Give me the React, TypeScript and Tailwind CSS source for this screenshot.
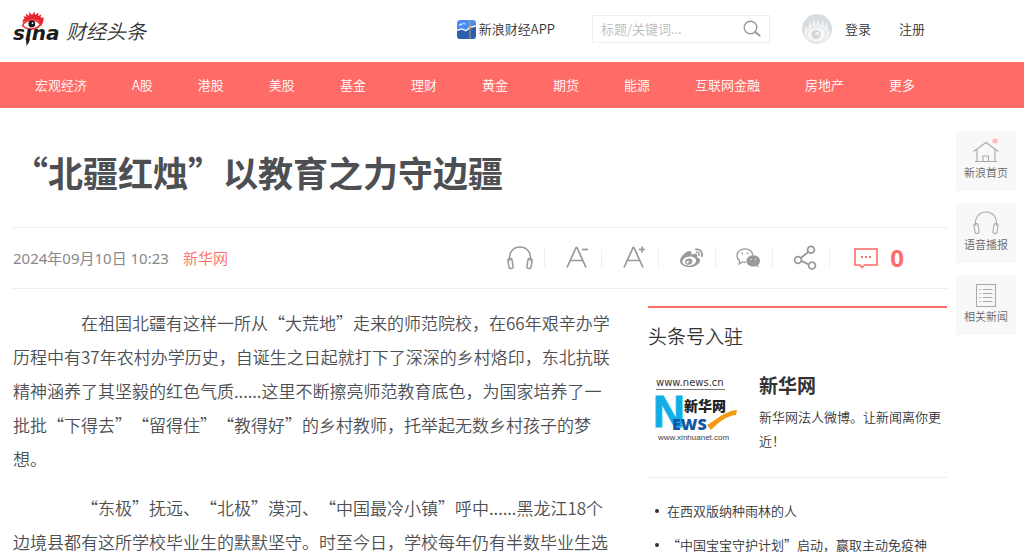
import React from 'react';
import { FaWeibo } from 'react-icons/fa';

const navItems = [
  '宏观经济', 'A股', '港股', '美股', '基金', '理财',
  '黄金', '期货', '能源', '互联网金融', '房地产', '更多',
];

const relatedNews = [
  '在西双版纳种雨林的人',
  '“中国宝宝守护计划”启动，赢取主动免疫神',
];

const SinaLogo = () => (
  <svg width="48" height="36" viewBox="0 0 48 36" role="img" aria-label="sina">
    <path
      d="M9.5 12C9.5 10 10 8.5 11.5 7.5L10.5 5L13.5 6L12.5 2.5L16 4.8L16.5 1L19 4L21.5 0.5L22 4L25.5 1.5L25 5L28.5 3.5L27.3 6.5L30.5 6.5C30.8 10 30 12.5 28 15C27.5 11 25 8.8 20 8.6C15 8.6 12 10 9.5 12Z"
      fill="#e8252f"
    />
    <path d="M9.5 14.5C12.5 8.5 23 7 27.5 13.5C24 19 14 19.5 9.5 14.5Z" fill="#fff" stroke="#e8252f" strokeWidth="1.5" />
    <circle cx="18.8" cy="13" r="3.4" fill="#1a1a1a" />
    <circle cx="19.6" cy="12.2" r="0.9" fill="#fff" />
    <text x="0" y="29" fontFamily="DejaVu Sans, sans-serif" fontSize="20" fontWeight="700" fontStyle="italic" fill="#1a1a1a">
      sına
    </text>
    <path d="M13 28H17L16 31L13.5 35Z" fill="#1a1a1a" />
  </svg>
);

const AppIcon = () => (
  <svg width="19" height="19" viewBox="0 0 19 19">
    <rect width="19" height="19" rx="3.5" fill="#4a8cf0" />
    <path d="M0 11L5 9.5L9 11L13 7.5L19 6V15.5Q19 19 15.5 19H3.5Q0 19 0 15.5Z" fill="#2e5fad" />
    <path d="M0 10.5L5 9L9 10.8L13 7.4L19 6" fill="none" stroke="#fff" strokeWidth="1.3" />
    <path d="M2.5 6Q3 3.5 5 4.5Q7 2 8.5 4.5" fill="none" stroke="#cfe2ff" strokeWidth="1.2" />
    <path d="M13 0V19" stroke="#c9a77c" strokeWidth="0.9" />
    <circle cx="13" cy="7.4" r="1.4" fill="#e8a45a" />
  </svg>
);

const Avatar = () => (
  <svg width="30" height="30" viewBox="0 0 30 30">
    <circle cx="15" cy="15" r="15" fill="#dadddf" />
    <path d="M2 19L4 12L6 15L8 7L10 13L12 5L14 12L16 5L18 12L21 6L22 13L25 9L26 15L28 19Q27 28 15 29Q3 28 2 19Z" fill="#f1f2f3" />
    <ellipse cx="14.5" cy="20.5" rx="9" ry="7.5" fill="#f9f9f9" stroke="#e2e4e6" />
    <circle cx="14" cy="20.5" r="4.8" fill="#d6d9dc" />
    <circle cx="15.2" cy="19.5" r="1.8" fill="#eef0f1" />
  </svg>
);

const SearchIcon = () => (
  <svg width="18" height="18" viewBox="0 0 18 18" fill="none" stroke="#999">
    <circle cx="7.5" cy="7.5" r="6.3" strokeWidth="1.4" />
    <path d="M12 12L16.5 15.5" strokeWidth="2.2" strokeLinecap="round" />
  </svg>
);

const Headphones = ({ width = 1.5 }: { width?: number }) => (
  <svg width="26" height="26" viewBox="0 0 26 26" fill="none" stroke="currentColor" strokeWidth={width} strokeLinejoin="round">
    <path d="M3 16C1 8 6 2 13 2S25 8 23 16" />
    <rect x="1.4" y="13.5" width="4.2" height="10" rx="1.6" transform="rotate(-9 3.5 18.5)" />
    <rect x="20.4" y="13.5" width="4.2" height="10" rx="1.6" transform="rotate(9 22.5 18.5)" />
  </svg>
);

const FontSizeIcon = ({ larger }: { larger?: boolean }) => (
  <svg width="24" height="24" viewBox="0 0 24 24" fill="none" stroke="currentColor" strokeWidth="1.7">
    <path d="M2 21.5L11.1 1.5H11.9L21 21.5M5.5 14.5H17.5" />
    <path d="M17 3.5H23" />
    {larger && <path d="M20 0.5V6.5" />}
  </svg>
);

const WechatIcon = () => (
  <svg width="25" height="22" viewBox="0 0 25 22">
    <path
      d="M10 15.2Q8 15.6 6.5 15L3.2 17L3.6 13.8C2 12.6 1 11 1 8.8C1 4.8 4.5 1.8 9 1.8C13 1.8 16.4 4.4 16.8 7.8"
      fill="none"
      stroke="currentColor"
      strokeWidth="1.3"
    />
    <circle cx="6.2" cy="6.4" r="0.9" fill="currentColor" />
    <circle cx="11.6" cy="6.4" r="0.9" fill="currentColor" />
    <path d="M17.3 8.3C13.3 8.3 10.5 10.8 10.5 14C10.5 17.2 13.5 19.5 17 19.5Q18.8 19.5 20 19L22.6 20.4L22.1 17.9Q24 16.4 24 14C24 10.8 21.2 8.3 17.3 8.3Z" fill="currentColor" />
    <circle cx="15.2" cy="12.4" r="0.6" fill="#fff" />
    <circle cx="19.5" cy="12.4" r="0.6" fill="#fff" />
  </svg>
);

const ShareIcon = () => (
  <svg width="24" height="26" viewBox="0 0 24 26" fill="none" stroke="currentColor" strokeWidth="1.8">
    <circle cx="5" cy="15" r="3.4" />
    <circle cx="18" cy="4.8" r="3.4" />
    <circle cx="19" cy="20.5" r="3.4" />
    <path d="M7.8 13L15.2 7M8.3 15.9L15.6 19.4" />
  </svg>
);

const CommentIcon = () => (
  <svg width="24" height="22" viewBox="0 0 24 22" fill="none" stroke="currentColor" strokeWidth="1.6">
    <path d="M1 2H23V18H10.5L8 20.5L6 18H1Z" />
    <path d="M7 10H9M11 10H13M15 10H17" strokeWidth="1.8" />
  </svg>
);

const HomeIcon = () => (
  <svg width="28" height="26" viewBox="0 0 28 26" fill="none" stroke="#aaa" strokeWidth="1.1">
    <path d="M1.5 13.5L14 4.5L26.5 13.5M5 11.5V23.5M23 11.5V23.5M3 23.5H25M11 23V18H16.5V23" />
    <circle cx="23" cy="3" r="2.6" fill="#fdbab6" stroke="none" />
  </svg>
);

const NewsIcon = () => (
  <svg width="28" height="26" viewBox="0 0 28 26" fill="none" stroke="#aaa" strokeWidth="1.1">
    <rect x="4.5" y="2.5" width="19" height="22" />
    <path d="M11 7.5H20.5M11 11.5H20.5M11 15.5H20.5M11 19.5H20.5" />
    <path d="M7.5 7.5H9M7.5 11.5H9M7.5 15.5H9M7.5 19.5H9" />
  </svg>
);

const XinhuaLogo = () => (
  <svg width="84" height="66" viewBox="0 0 84 66" role="img" aria-label="新华网">
    <text x="1" y="9" fontFamily="DejaVu Sans, sans-serif" fontSize="10" fontWeight="400" fill="#333">www.news.cn</text>
    <path d="M1 12.5H70" stroke="#555" strokeWidth="0.8" />
    <text x="-2" y="50" fontFamily="Liberation Sans, sans-serif" fontSize="44" fontWeight="700" fill="#12aee8" stroke="#12aee8" strokeWidth="1">N</text>
    <text x="29" y="34" fontFamily="Noto Sans CJK SC, sans-serif" fontSize="14" fontWeight="900" fill="#222">新华网</text>
    <text x="17" y="53" fontFamily="Open Sans, sans-serif" fontSize="16" fontWeight="800" fill="#1555a5">EWS</text>
    <path d="M52 48C57 46 68 34 82 33L81 38C71 39 64 45 56 53Z" fill="#f39a14" />
    <text x="3" y="63" fontFamily="Liberation Sans, sans-serif" fontSize="8" fill="#444">www.xinhuanet.com</text>
  </svg>
);

const tools = [
  { label: '语音播报', icon: <Headphones /> },
  { label: '缩小字体', icon: <FontSizeIcon /> },
  { label: '放大字体', icon: <FontSizeIcon larger /> },
  { label: '微博', icon: <FaWeibo size={23} /> },
  { label: '微信', icon: <WechatIcon /> },
  { label: '分享', icon: <ShareIcon /> },
];

const shortcuts = [
  { label: '新浪首页', icon: <HomeIcon /> },
  { label: '语音播报', icon: <Headphones width={1.1} /> },
  { label: '相关新闻', icon: <NewsIcon /> },
];

const Header = () => (
  <header className="flex h-[62px] items-center pb-1 pl-[13px] text-[13px] text-[#333]">
    <a href="#" className="flex items-center gap-[5px]">
      <SinaLogo />
      <span className="pt-1 text-[20px] italic">财经头条</span>
    </a>
    <div className="ml-auto flex items-center pr-[99px]">
      <a href="#" className="flex items-center gap-[3px]">
        <AppIcon />
        新浪财经APP
      </a>
      <form className="ml-[37px] flex h-7 w-[178px] items-center border border-[#eee] px-2" onSubmit={(e) => e.preventDefault()}>
        <input
          type="text"
          aria-label="搜索"
          placeholder="标题/关键词..."
          className="min-w-0 flex-1 outline-none placeholder:text-[#bbb]"
        />
        <button type="submit" aria-label="搜索">
          <SearchIcon />
        </button>
      </form>
      <span className="ml-8"><Avatar /></span>
      <a href="#" className="ml-[13px]">登录</a>
      <a href="#" className="ml-7">注册</a>
    </div>
  </header>
);

const App: React.FC = () => {
  return (
    <div
      lang="zh-CN"
      className="bg-white font-['Noto_Sans_CJK_SC',sans-serif] font-[350] [text-spacing-trim:space-all]"
    >
      <Header />

      <nav className="flex h-[46px] items-center gap-[45px] bg-[#ff6b66] pl-[35px] text-[13px] whitespace-nowrap text-white">
        {navItems.map((item) => (
          <a key={item} href="#">{item}</a>
        ))}
      </nav>

      <div className="flex gap-[9px] pr-2 pl-[13px]">
        <main className="min-w-0 flex-1">
          <h1 className="flex h-[119px] items-center pt-2.5 text-[35px] font-bold text-[#4d4f53]">
            “北疆红烛”以教育之力守边疆
          </h1>

          <div className="flex h-[62px] items-center border-y border-[#eee] text-[15px] text-[#888]">
            <time className="font-['Noto_Sans','Noto_Sans_CJK_SC',sans-serif] font-normal">2024年09月10日 10:23</time>
            <a href="#" className="ml-3.5 text-[#ff6b66]">新华网</a>
            <div className="ml-auto flex items-center text-[#999]">
              {tools.map((tool) => (
                <button
                  key={tool.label}
                  aria-label={tool.label}
                  className="flex h-[18px] w-[57px] items-center justify-center border-r border-[#eee] pl-2"
                >
                  {tool.icon}
                </button>
              ))}
              <a href="#" className="flex items-center gap-3 pr-[43px] pl-6 text-[#ff6b66]">
                <CommentIcon />
                <span className="font-['Open_Sans',sans-serif] text-[24px] font-bold">0</span>
              </a>
            </div>
          </div>

          <div className="flex justify-between pt-[17px]">
            <article className="w-[600px] text-[17px] leading-[34px] text-[#4d4f53]">
              <p className="mb-[15px] indent-[4em]">
                在祖国北疆有这样一所从“大荒地”走来的师范院校，在66年艰辛办学历程中有37年农村办学历史，自诞生之日起就打下了深深的乡村烙印，东北抗联精神涵养了其坚毅的红色气质......这里不断擦亮师范教育底色，为国家培养了一批批“下得去”“留得住”“教得好”的乡村教师，托举起无数乡村孩子的梦想。
              </p>
              <p className="indent-[4em]">
                “东极”抚远、“北极”漠河、“中国最冷小镇”呼中......黑龙江18个边境县都有这所学校毕业生的默默坚守。时至今日，学校每年仍有半数毕业生选
              </p>
            </article>

            <aside className="w-[299px] border-t-2 border-[#ff6b66] text-[13px] text-[#333]">
              <h2 className="pt-[14px] text-[19px] leading-7">头条号入驻</h2>
              <div className="flex gap-5 border-b border-[#eee] pt-[19px] pb-6 pl-[7px]">
                <a href="#" className="pt-2"><XinhuaLogo /></a>
                <div className="flex-1">
                  <h3 className="pb-1 text-[19px] leading-8 font-bold">新华网</h3>
                  <p className="leading-6">新华网法人微博。让新闻离你更近！</p>
                </div>
              </div>
              <ul className="pt-4 leading-[34px]">
                {relatedNews.map((news) => (
                  <li key={news} className="flex items-center gap-2 pl-[7px]">
                    <span className="size-1 rounded-full bg-[#333]" />
                    <a href="#" className="whitespace-nowrap">{news}</a>
                  </li>
                ))}
              </ul>
            </aside>
          </div>
        </main>

        <nav className="flex w-[60px] flex-col gap-3 pt-[23px]">
          {shortcuts.map((item) => (
            <a
              key={item.label}
              href="#"
              className="flex h-[60px] flex-col items-center justify-center bg-[#f8f8f8] pb-1 text-[11px] leading-4 text-[#666]"
            >
              <span className="text-[#aaa]">{item.icon}</span>
              {item.label}
            </a>
          ))}
        </nav>
      </div>
    </div>
  );
};

export default App;
